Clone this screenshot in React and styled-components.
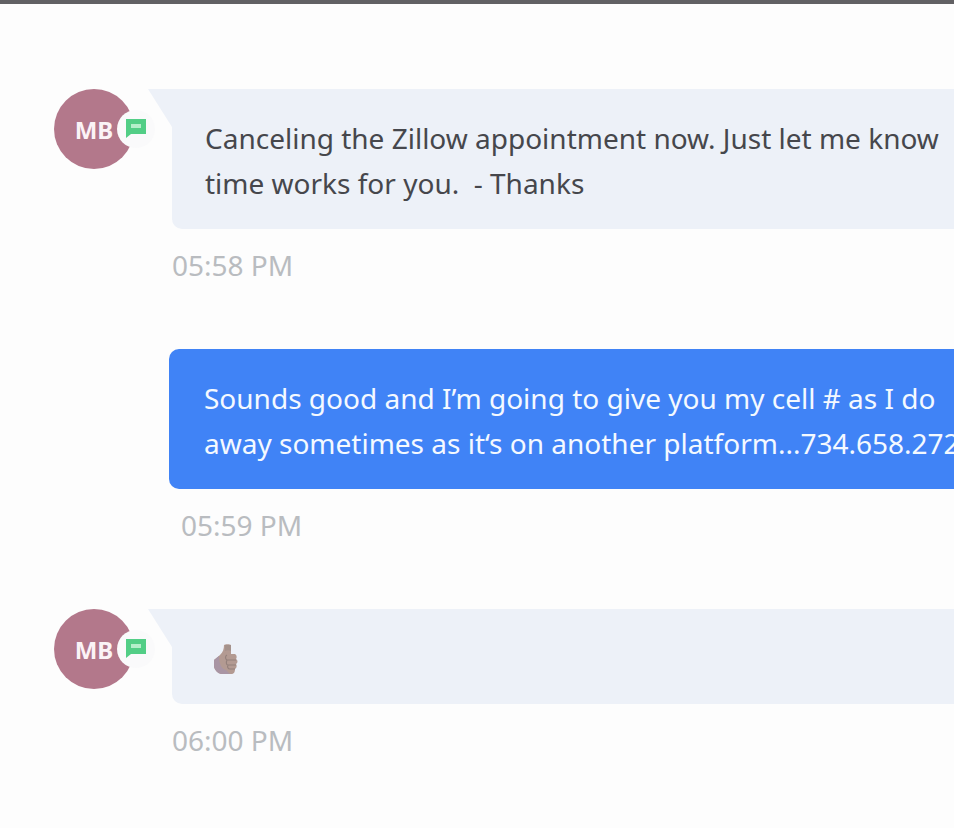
import React from 'react';
import styled, { createGlobalStyle } from 'styled-components';

const GlobalStyle = createGlobalStyle`
  body {
    margin: 0;
    background-color: #fdfdfd;
    font-family: "Noto Sans", "Open Sans", sans-serif;
    overflow-x: hidden;
  }
`;

const Page = styled.main`
  border-top: 4px solid #626164;
  overflow: hidden;
`;

const Thread = styled.div`
  display: flex;
  flex-direction: column;
  gap: 60px;
  padding: 85px 0 60px 54px;
`;

const Message = styled.article`
  display: grid;
  grid-template-columns: 80px minmax(0, 1fr);
  column-gap: ${({ $sent }) => $sent ? '35px' : '38px'};
`;

const Avatar = styled.div`
  position: relative;
  width: 80px;
  height: 80px;
  border-radius: 50%;
  background-color: #b3788b;
  color: #fbf3f6;
  display: flex;
  align-items: center;
  justify-content: center;
  font-size: 24px;
  font-weight: 700;
`;

const Badge = styled.span`
  position: absolute;
  left: 63px;
  top: 21px;
  width: 38px;
  height: 38px;
  border-radius: 50%;
  background-color: #fafafb;
  display: flex;
  align-items: center;
  justify-content: center;
`;

const Body = styled.div`
  grid-column: 2;
  min-width: 0;
`;

const Bubble = styled.div`
  position: relative;
  padding: 27px 0 23px ${({ $sent }) => $sent ? '35px' : '33px'};
  border-radius: ${({ $sent }) => $sent ? '10px 0 0 10px' : '0 0 0 10px'};
  background-color: ${({ $sent }) => $sent ? '#4083f6' : '#edf1f8'};
  color: ${({ $sent }) => $sent ? '#f4f9ff' : '#46474c'};
`;

const Tail = styled.span`
  position: absolute;
  right: 100%;
  top: 0;
  width: 24px;
  height: 38px;
  background-color: #edf1f8;
  clip-path: polygon(0 0, 100% 0, 100% 100%);
`;

const Text = styled.p`
  margin: 0;
  font-size: 28px;
  line-height: 45px;
  white-space: pre;
`;

const Time = styled.time`
  display: block;
  margin-top: 14px;
  margin-bottom: 1px;
  padding-left: ${({ $sent }) => $sent ? '12px' : '0'};
  color: #b9bcc0;
  font-size: 28px;
  line-height: 45px;
`;

const Thumb = styled.svg`
  display: block;
  margin: 8px 0 6px 8px;
`;

function ChatIcon() {
  return (
    <svg width="22" height="20" viewBox="0 0 22 20" aria-hidden="true">
      <path d="M1 0h20v15H6l-5 4z" fill="#52ce86" />
      <path d="M6 5h10v4H6z" fill="#b5efcb" />
    </svg>
  );
}

function ThumbsUp() {
  return (
    <Thumb width="26" height="31" viewBox="0 0 26 31" role="img" aria-label="Thumbs up">
      <path d="M11 1c1-1 6-1 7 0v9h4c2 1 2 4 1 5 2 1 2 4 0 5 1 1 1 4-1 5 0 3-1 5-4 5H8c-4-1-6-4-7-7v-7l6-5c3-3 4-6 4-10z" fill="#b39a92" />
      <path d="M1 16v7c1 3 3 6 7 7h9l-4-4c-4-1-7-5-7-14z" fill="#a995a4" />
      <path d="M12 1h6v6c-2-1-4-1-6 0z" fill="#a5928c" />
      <path d="M14 11c-2 1-2 4 0 5h9M14 16c-1 2-1 5 1 5h8M15 21c-1 2 0 4 2 4h5" fill="none" stroke="#94807b" strokeWidth="1.2" />
    </Thumb>
  );
}

function ChatMessage({ sent, time, children }) {
  return (
    <Message $sent={sent}>
      {!sent && (
        <Avatar>
          MB
          <Badge><ChatIcon /></Badge>
        </Avatar>
      )}
      <Body>
        <Bubble $sent={sent}>
          {!sent && <Tail />}
          {children}
        </Bubble>
        <Time $sent={sent}>{time}</Time>
      </Body>
    </Message>
  );
}

function App() {
  return (
    <>
      <GlobalStyle />
      <Page>
        <Thread>
          <ChatMessage time="05:58 PM">
            <Text>{'Canceling the Zillow appointment now. Just let me know\ntime works for you.  - Thanks'}</Text>
          </ChatMessage>
          <ChatMessage sent time="05:59 PM">
            <Text>{'Sounds good and I’m going to give you my cell # as I do\naway sometimes as it‘s on another platform...734.658.272'}</Text>
          </ChatMessage>
          <ChatMessage time="06:00 PM">
            <ThumbsUp />
          </ChatMessage>
        </Thread>
      </Page>
    </>
  );
}

export default App;
